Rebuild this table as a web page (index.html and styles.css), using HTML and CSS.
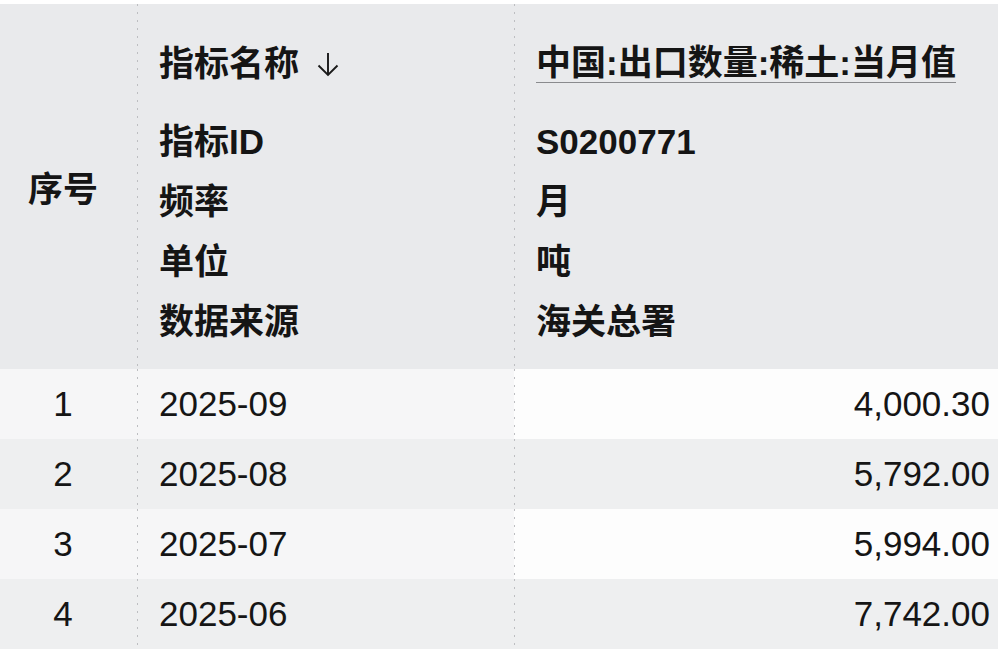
FILE: index.html
```html
<!DOCTYPE html>
<html lang="zh-CN">
<head>
<meta charset="utf-8">
<title>指标数据</title>
<link rel="stylesheet" href="styles.css">
</head>
<body>
<div class="table">
  <div class="row head">
    <div class="cell c-seq head-seq">序号</div>
    <div class="cell c-name sep">
      <div class="title">指标名称<svg class="arrow" width="22" height="26" viewBox="0 0 22 26"><path d="M11 1 V23 M1.5 13.5 L11 23 L20.5 13.5" fill="none" stroke="#1a1a1a" stroke-width="1.9"/></svg></div>
      <div class="lines">
        <div class="line">指标ID</div>
        <div class="line">频率</div>
        <div class="line">单位</div>
        <div class="line">数据来源</div>
      </div>
    </div>
    <div class="cell c-val-head sep">
      <div class="title"><span class="title-link">中国:出口数量:稀土:当月值</span></div>
      <div class="lines">
        <div class="line">S0200771</div>
        <div class="line">月</div>
        <div class="line">吨</div>
        <div class="line">海关总署</div>
      </div>
    </div>
  </div>
  <div class="row body odd">
    <div class="cell c-seq">1</div>
    <div class="cell c-date sep">2025-09</div>
    <div class="cell c-num sep">4,000.30</div>
  </div>
  <div class="row body even">
    <div class="cell c-seq">2</div>
    <div class="cell c-date sep">2025-08</div>
    <div class="cell c-num sep">5,792.00</div>
  </div>
  <div class="row body odd">
    <div class="cell c-seq">3</div>
    <div class="cell c-date sep">2025-07</div>
    <div class="cell c-num sep">5,994.00</div>
  </div>
  <div class="row body even">
    <div class="cell c-seq">4</div>
    <div class="cell c-date sep">2025-06</div>
    <div class="cell c-num sep">7,742.00</div>
  </div>
</div>
</body>
</html>
```
FILE: styles.css
```css
html, body {
  margin: 0;
  padding: 0;
  background: #ffffff;
}

body {
  padding-top: 4px;
  font-family: "Liberation Sans", "Noto Sans CJK SC", sans-serif;
  font-size: 35px;
  color: #151515;
}

.table {
  width: 998px;
  display: flex;
  flex-direction: column;
}

.row {
  display: grid;
  grid-template-columns: 137px 377px 484px;
}

.head {
  background-color: #e9eaec;
  font-weight: 700;
}

.body {
  height: 70px;
}

.body .cell {
  display: flex;
  align-items: center;
  line-height: 70px;
}

.odd .cell {
  background-color: #f6f6f7;
}

.odd .c-num {
  background-color: #fdfdfd;
}

.even .cell {
  background-color: #eeeff0;
}

.head .cell {
  background-color: #e9eaec;
}

.sep {
  background-image: repeating-linear-gradient(to bottom, #bdbec1 0 2px, transparent 2px 8px);
  background-size: 1px 100%;
  background-repeat: no-repeat;
  background-position: left top;
}

.c-seq {
  justify-content: center;
  padding-right: 11px;
}

.head-seq {
  display: flex;
  align-items: center;
  justify-content: center;
}

.c-name,
.c-val-head {
  padding: 40px 0 17px 22px;
}

.title {
  display: flex;
  align-items: center;
  height: 39px;
  line-height: 38px;
}

.arrow {
  margin-left: 18px;
  margin-top: 3px;
}

.title-link {
  line-height: 38px;
  border-bottom: 1px solid #8a8b8e;
}

.lines {
  margin-top: 29px;
  display: flex;
  flex-direction: column;
}

.line {
  height: 60px;
  line-height: 60px;
}

.c-date {
  padding-left: 22px;
}

.c-num {
  justify-content: flex-end;
  padding-right: 8px;
}
```
